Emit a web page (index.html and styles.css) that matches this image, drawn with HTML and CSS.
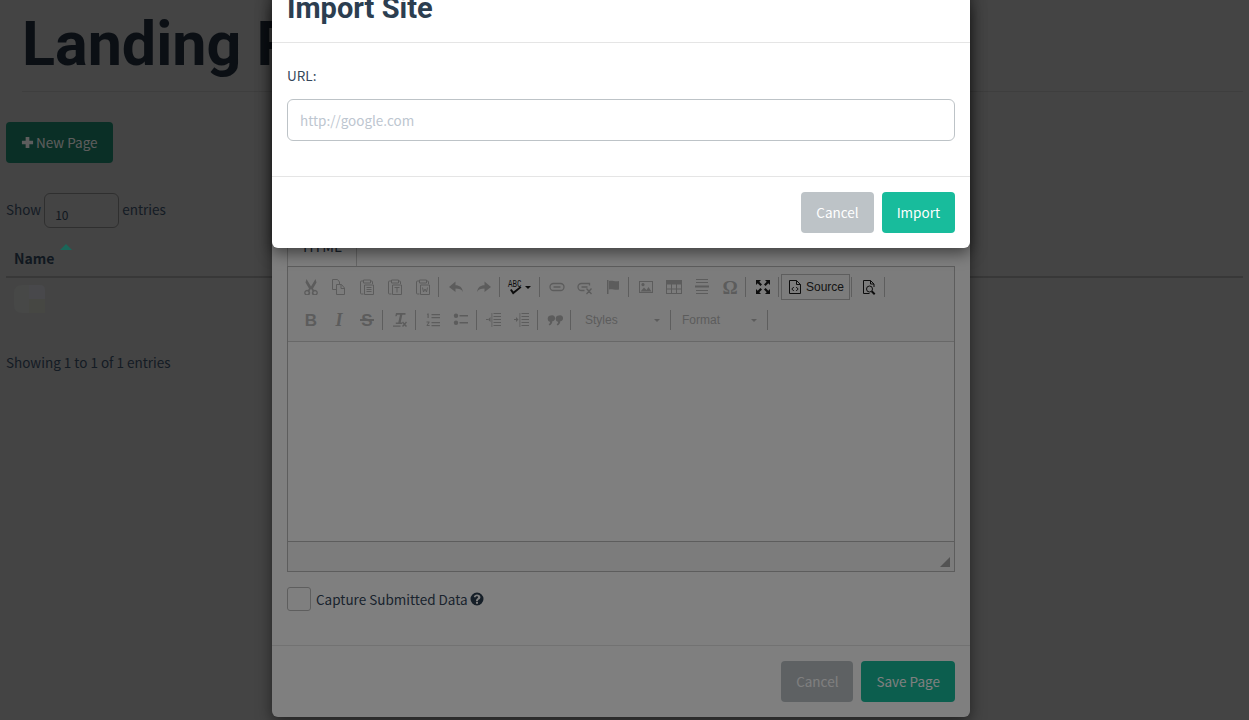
FILE: index.html
```html
<!DOCTYPE html>
<html lang="en">
<head>
<meta charset="utf-8">
<title>Landing Pages</title>
<link rel="stylesheet" href="styles.css">
</head>
<body>
<main class="page">
  <h1 class="page-title">Landing Pages</h1>
  <button class="btn btn-primary new-page"><svg class="plus" viewBox="0 0 14 14"><path d="M5 1h4v4h4v4H9v4H5V9H1V5h4z"/></svg>New Page</button>
  <div class="length"><span>Show</span><span class="select">10</span><span>entries</span></div>
  <div class="thead"><b>Name</b><i class="sort"></i></div>
  <div class="trow"><svg class="thumb" viewBox="0 0 31 28"><path class="t1" d="M8 0H15V28H8Q0 28 0 20V8Q0 0 8 0z"/><path class="t2" d="M15 0H26Q31 0 31 5V14H15z"/><path class="t3" d="M15 14H31V28H15z"/></svg></div>
  <div class="info">Showing 1 to 1 of 1 entries</div>
</main>

<div class="backdrop first"></div>
<section class="modal lower">
  <div class="lower-body">
    <div class="tabs"><span class="tab">HTML</span></div>
    <div class="editor">
      <div class="toolbar">
        <div class="tool-row">
          <span class="ico off"><svg viewBox="0 0 16 16"><path fill-rule="evenodd" d="M3.500 0l4.500 7.500L12.500 0l1 3.500-3.500 6 1 1.500a3 3 0 1 1-1.500 1L8 9.800l-1.500 2.200a3 3 0 1 1-1.500-1l1-1.500-3.500-6zM4 12.300a1.500 1.500 0 1 0 .01 0zM12 12.300a1.500 1.500 0 1 0 .01 0z"/></svg></span>
          <span class="ico off"><svg viewBox="0 0 16 16" class="line"><path d="M1.500 .5h5l2 2.500v2M1.500 .5v10h3.500M5.500 5.500h5l3 3.500v6.500h-8zM10 5.500v4h3.500"/></svg></span>
          <span class="ico off"><svg viewBox="0 0 16 16" class="line"><path d="M4.500 2H2.500Q1.500 2 1.500 3v11q0 1 1 1h2M11.500 2h1q1 0 1 1v2M4.500 1h7v3h-7zM5.500 6h9v9.500h-9zM7.500 8.500h5M7.500 10.500h5M7.500 12.500h5"/></svg></span>
          <span class="ico off"><svg viewBox="0 0 16 16" class="line"><path d="M4.500 2H2.500Q1.500 2 1.500 3v11q0 1 1 1h2M11.500 2h1q1 0 1 1v2M4.500 1h7v3h-7zM5.500 6h9v9.500h-9zM7.500 8.500h5M10 8.500v5"/></svg></span>
          <span class="ico off"><svg viewBox="0 0 16 16" class="line"><path d="M4.500 2H2.500Q1.500 2 1.500 3v11q0 1 1 1h2M11.500 2h1q1 0 1 1v2M4.500 1h7v3h-7zM5.500 6h9v9.500h-9zM7.500 8.500l1 4.500 1.500-3 1.500 3 1-4.500"/></svg></span>
          <i class="sep"></i>
          <span class="ico off"><svg viewBox="0 0 16 16"><path d="M7.500 2.500v3.700c4 0 6.800 2 7.500 6.800-1.500-2.700-3.800-3.500-7.500-3.500v3.500L1 8z"/></svg></span>
          <span class="ico off"><svg viewBox="0 0 16 16"><path d="M8.500 2.500v3.700c-4 0-6.800 2-7.500 6.800 1.500-2.700 3.800-3.500 7.500-3.500v3.500L15 8z"/></svg></span>
          <i class="sep"></i>
          <span class="ico spell"><svg class="abc" viewBox="0 0 16 16"><text x="1" y="8" class="abc-text" textLength="13.5" lengthAdjust="spacingAndGlyphs">ABC</text><path d="M3 11l3 4.500L14.500 8.500l-1.500-1-6.500 5-2-2.500z"/></svg><i class="caret dark"></i></span>
          <i class="sep"></i>
          <span class="ico off"><svg viewBox="0 0 16 16" class="line thick"><path d="M6 4.500H4.500a3.500 3.500 0 0 0 0 7H6M10 4.500h1.500a3.500 3.500 0 0 1 0 7H10M6 4.500h4M6 11.500h4M4.500 8h7"/></svg></span>
          <span class="ico off"><svg viewBox="0 0 16 16" class="line thick"><path d="M12.500 6.500V4.500H4.500a3.500 3.500 0 0 0 0 7H7.500M4.500 8h6M9.500 9.500l5 5.500M14.500 9.500l-5 5.500"/></svg></span>
          <span class="ico off"><svg viewBox="0 0 16 16"><path d="M2 1h1.500v14H2zM4 2c3-1 6 1 10 0v8.500c-4 1-7-1-10 0z"/></svg></span>
          <i class="sep"></i>
          <span class="ico off"><svg viewBox="0 0 16 16"><path fill-rule="evenodd" d="M1 2h14v12H1zM2 3v10h12V3z"/><path d="M2.500 12.500l3.500-4 2.500 2.500 2-3 3 4.500zM5 4a1.600 1.600 0 1 1-.01 0z"/></svg></span>
          <span class="ico off"><svg viewBox="0 0 16 16"><path fill-rule="evenodd" d="M0 1h16v14H0zM1 5.500v4h4v-4zM6 5.500v4h4v-4zM11 5.500v4h4v-4zM1 10.500V14h4v-3.500zM6 10.500V14h4v-3.500zM11 10.500V14h4v-3.500z"/></svg></span>
          <span class="ico off"><svg viewBox="0 0 16 16"><path d="M2 0h12v1H2zM2 3h12v1H2zM1 6.500h14v2H1zM2 11h12v1H2zM2 14h12v1H2z"/></svg></span>
          <span class="ico off omega">Ω</span>
          <i class="sep"></i>
          <span class="ico"><svg viewBox="0 0 16 16"><path d="M1 1h5L4.300 2.700 7 5.400 5.400 7 2.700 4.300 1 6zM15 1v5l-1.700-1.700L10.600 7 9 5.400l2.700-2.700L10 1zM1 15v-5l1.700 1.700L5.400 9 7 10.600l-2.700 2.700L6 15zM15 15h-5l1.700-1.700L9 10.600 10.600 9l2.700 2.700L15 10z"/></svg></span>
          <i class="sep"></i>
          <span class="source"><svg viewBox="0 0 16 16"><path d="M2.500 1.500h7l4 4v9h-11zM9.500 1.500v4h4"/><path d="M6.800 8L4.800 10l2 2M9.200 8l2 2-2 2"/></svg>Source</span>
          <i class="sep"></i>
          <span class="ico"><svg viewBox="0 0 16 16" class="line"><path d="M2.500 1.500h7l3.500 3.500v3M9.500 1.500V5H13M2.500 1.500v13h6"/><circle cx="8.500" cy="10" r="3"/><path d="M10.700 12.200l3 3" class="thick-stroke"/></svg></span>
          <i class="sep"></i>
        </div>
        <div class="tool-row">
          <span class="ico off glyph bold">B</span>
          <span class="ico off glyph ital">I</span>
          <span class="ico off glyph strike">S</span>
          <i class="sep"></i>
          <span class="ico off"><svg viewBox="0 0 16 16"><path d="M4 1h9.500v1.800h-3.200L8.700 10.500h1.500v1.500H3.800v-1.500h2.500L8 2.800H5.300l-.8 1.500H3.300zM1 13.500h7.500v1.200H1z"/><path d="M10 10.500l1-.9 1.500 1.600 1.500-1.600 1 .9-1.600 1.800 1.600 1.800-1 .9-1.500-1.600-1.500 1.600-1-.9 1.600-1.800z"/></svg></span>
          <i class="sep"></i>
          <span class="ico off"><svg viewBox="0 0 16 16"><path d="M6.500 2h8.500v1.200H6.500zM6.500 5h8.500v1.200H6.500zM6.500 10h8.500v1.200H6.500zM6.500 13h8.500v1.200H6.500z"/><path d="M2.500 1.500h1.200V6H2.500V2.800H1.800zM1.500 9.500h3v.900L2.800 13h1.800v1h-3v-.800L3.300 10.500H1.500z"/></svg></span>
          <span class="ico off"><svg viewBox="0 0 16 16"><path d="M6.500 3h8.500v1.400H6.500zM6.500 10h8.500v1.400H6.500z"/><circle cx="3" cy="3.700" r="2.200"/><circle cx="3" cy="10.700" r="2.200"/></svg></span>
          <i class="sep"></i>
          <span class="ico off"><svg viewBox="0 0 16 16"><path d="M7.500 1h7.500v1H7.500zM7.500 4h7.500v1H7.500zM7.500 7h7.500v1H7.500zM7.500 10h7.500v1H7.500zM7.500 13h7.500v1H7.500z"/><path d="M5.500 1h.800v14h-.800zM4.500 5v5L2 7.500zM0 7h2v1H0z"/></svg></span>
          <span class="ico off"><svg viewBox="0 0 16 16"><path d="M7.500 1h7.500v1H7.500zM7.500 4h7.500v1H7.500zM7.500 7h7.500v1H7.500zM7.500 10h7.500v1H7.500zM7.500 13h7.500v1H7.500z"/><path d="M5.500 1h.800v14h-.800zM2 5v5l2.500-2.500zM0 7h2v1H0z"/></svg></span>
          <i class="sep"></i>
          <span class="ico off"><svg viewBox="0 0 16 16"><path d="M3.800 3.500a3 3 0 1 1 1.500 5.700c0 2-1 3.300-2.800 4.300l-.8-1.200c1-.7 1.500-1.500 1.500-2.300a3.300 3.300 0 0 1 .6-6.500zM11.800 3.500a3 3 0 1 1 1.500 5.700c0 2-1 3.300-2.800 4.300l-.8-1.200c1-.7 1.500-1.500 1.500-2.300a3.300 3.300 0 0 1 .6-6.500z"/></svg></span>
          <i class="sep"></i>
          <span class="combo styles">Styles<i class="caret"></i></span>
          <i class="sep"></i>
          <span class="combo format">Format<i class="caret"></i></span>
          <i class="sep"></i>
        </div>
      </div>
      <div class="edit-area"></div>
      <div class="editor-foot"><svg class="resize" viewBox="0 0 10 10"><path d="M10 0v10H0z"/></svg></div>
    </div>
    <label class="capture"><span class="check"></span>Capture Submitted Data <svg class="help" viewBox="0 0 14 14"><path fill-rule="evenodd" d="M7 .5a6.500 6.500 0 1 1 0 13 6.500 6.500 0 0 1 0-13zM6 9.800v2h2v-2zM7 2.600c-1.800 0-2.900 1-3.200 2.300l1.500.6c.3-.8.800-1.300 1.600-1.300.7 0 1.200.4 1.200 1 0 .5-.4.800-1 1.200C6.600 6.900 6 7.500 6 8.600v.3h2v-.2c0-.5.300-.8.900-1.200.8-.5 1.500-1.100 1.500-2.300 0-1.600-1.500-2.600-3.400-2.600z"/></svg></label>
  </div>
  <footer class="modal-foot">
    <button class="btn btn-muted">Cancel</button>
    <button class="btn btn-primary">Save Page</button>
  </footer>
</section>

<div class="backdrop second"></div>
<section class="modal upper">
  <header class="modal-head"><h2>Import Site</h2></header>
  <div class="modal-body">
    <label class="url-label" for="url">URL:</label>
    <input id="url" class="url" type="text" placeholder="http://google.com">
  </div>
  <footer class="modal-foot">
    <button class="btn btn-muted">Cancel</button>
    <button class="btn btn-primary">Import</button>
  </footer>
</section>
</body>
</html>
```
FILE: styles.css
```css
* { box-sizing: border-box; }
html, body { margin: 0; height: 100%; }
body {
  height: 720px;
  overflow: hidden;
  position: relative;
  background: #aaa;
  color: #34465a;
  font: 13.5px/21px "Noto Sans CJK SC", "Source Sans Pro", "Noto Sans", sans-serif;
}

.page { padding: 0 6px; }
.page-title {
  margin: 0 0 0 16px;
  height: 92px;
  padding-top: 8px;
  border-bottom: 1px solid #9c9c9c;
  font: 700 61px/72px Roboto, sans-serif;
  color: #1c2632;
  white-space: nowrap;
}
.btn {
  display: inline-flex;
  align-items: center;
  justify-content: center;
  height: 41px;
  padding: 0 15px;
  border: 0;
  border-radius: 4px;
  font: 400 13.5px/21px "Noto Sans CJK SC", sans-serif;
  color: #fff;
}
.btn-primary { background: #18bc9c; }
.btn-muted { background: #bdc3c7; }
.new-page { margin-top: 30px; background: #19765f; color: #e9e9e9; gap: 2px; }
.plus { width: 13px; height: 13px; fill: currentColor; }
.length { display: flex; align-items: flex-start; gap: 3px; margin-top: 30px; height: 35px; line-height: 32px; }
.select {
  width: 75px; height: 35px;
  padding: 11px 0 0 10px;
  border: 1px solid #777;
  border-radius: 6px;
  font-size: 12px;
  line-height: 20px;
  color: #2c3e50;
}
.thead {
  display: flex;
  margin-top: 13px;
  height: 37px;
  padding: 7px 0 0 8px;
  border-bottom: 2px solid #8c8c8c;
  font-size: 14px;
  color: #2c3e50;
  position: relative;
}
.sort {
  position: absolute; left: 54px; top: 3px;
  border: 6px solid transparent; border-top: 0; border-bottom-color: #45ffe0;
}
.trow { height: 72px; padding: 7px 0 0 8px; }
.thumb { display: block; width: 31px; height: 28px; }
.t1 { fill: #b2b4b3; } .t2 { fill: #b4b6bc; } .t3 { fill: #b0b2a8; }
.info { margin-top: 2px; }

.backdrop { position: absolute; inset: 0; background: #000; }
.first { opacity: .2; }
.second { opacity: .5; }

.modal {
  position: absolute;
  left: 272px;
  width: 698px;
  background: #fff;
  border-radius: 6px;
  box-shadow: 0 5px 15px rgba(0,0,0,.5);
}
.lower { top: 0; height: 717px; display: flex; flex-direction: column; }
.upper { top: -30px; }
.lower-body { flex: 1; padding: 238px 15px 0; }
.tabs { height: 29px; border-bottom: 1px solid #ccc; }
.tab {
  display: block; width: 70px; height: 29px; padding-left: 15px;
  border: 1px solid #ccc; border-bottom-color: #fff; background: #fff;
  font-size: 14.5px; line-height: 14px;
}
.editor { height: 306px; margin-top: -1px; border: 1px solid #bbb; display: flex; flex-direction: column; }
.toolbar { height: 75px; padding: 7px 0 0 9px; background: #f8f8f8; border-bottom: 1px solid #d1d1d1; }
.tool-row { display: flex; align-items: center; height: 26px; margin-bottom: 7px; }
.ico { display: flex; align-items: center; justify-content: center; flex: none; width: 28px; height: 26px; color: #1a1a1a; }
.ico svg { width: 16px; height: 16px; fill: currentColor; }
.ico .line { fill: none; stroke: currentColor; stroke-width: 1; }
.ico .thick { stroke-width: 1.300; }
.thick-stroke { stroke-width: 2; }
.off { color: #b8b8b8; }
.sep { flex: none; width: 1px; height: 20px; margin: 0 3px 0 1px; background: #bcbcbc; }
.spell { width: 35px; justify-content: flex-start; padding-left: 4px; gap: 2px; }
.abc-text { font: 400 10px "Liberation Mono", monospace; }
.omega { font: 700 19px/1 "Liberation Serif", serif; }
.glyph { font-size: 17px; font-weight: 700; }
.bold { font-family: "Liberation Sans", sans-serif; }
.ital { font-family: "Liberation Serif", serif; font-style: italic; font-size: 18px; }
.strike { font-family: "Liberation Sans", sans-serif; position: relative; }
.strike::after {
  content: ""; position: absolute; left: 7px; right: 7px; top: 12px; height: 2px; background: currentColor;
}
.caret { display: block; border: 3px solid transparent; border-top-color: #b8b8b8; border-bottom: 0; }
.caret.dark { border-top-color: #1a1a1a; }
.source {
  display: flex; align-items: center; flex: none;
  width: 69px; height: 26px; padding-left: 5px; gap: 3px;
  margin-left: -1px;
  border: 1px solid #bcbcbc;
  font: 12px/16px "Liberation Sans", sans-serif; color: #2a2a2a;
}
.source svg { width: 16px; height: 16px; fill: none; stroke: #1a1a1a; }
.combo {
  display: flex; align-items: center; justify-content: space-between; flex: none; height: 26px;
  font: 12px/16px "Liberation Sans", sans-serif; color: #b8b8b8;
}
.styles { width: 95px; padding: 0 9px 0 11px; }
.format { width: 92px; padding: 0 9px 0 8px; }
.edit-area { flex: 1; background: #fff; }
.editor-foot { height: 30px; background: #f8f8f8; border-top: 1px solid #bbb; position: relative; }
.resize { position: absolute; right: 4px; bottom: 4px; width: 10px; height: 10px; fill: #a6a6a6; }
.capture { display: flex; align-items: center; margin-top: 15px; height: 24px; gap: 5px; }
.check { width: 24px; height: 24px; border: 1px solid #bdbdbd; border-radius: 3px; }
.help { width: 14px; height: 14px; fill: #2c3e50; margin-left: -3px; }

.modal-head { height: 73px; padding: 22px 15px 0; border-bottom: 1px solid #e5e5e5; }
.modal-head h2 { margin: 0; font: 700 29px/32px Roboto, sans-serif; color: #2c3e50; }
.modal-body { height: 133px; padding: 22px 15px 0; }
.url-label { display: block; height: 21px; }
.url {
  display: block; width: 100%; height: 42px; margin-top: 13px; padding: 0 12px;
  border: 1px solid #bdc3c7; border-radius: 6px;
  font: 13.5px/21px "Noto Sans CJK SC", sans-serif; color: #2c3e50;
}
.url::placeholder { color: #bdc6d0; opacity: 1; }
.modal-foot { display: flex; justify-content: flex-end; gap: 8px; height: 72px; padding: 15px; border-top: 1px solid #e5e5e5; }
```
